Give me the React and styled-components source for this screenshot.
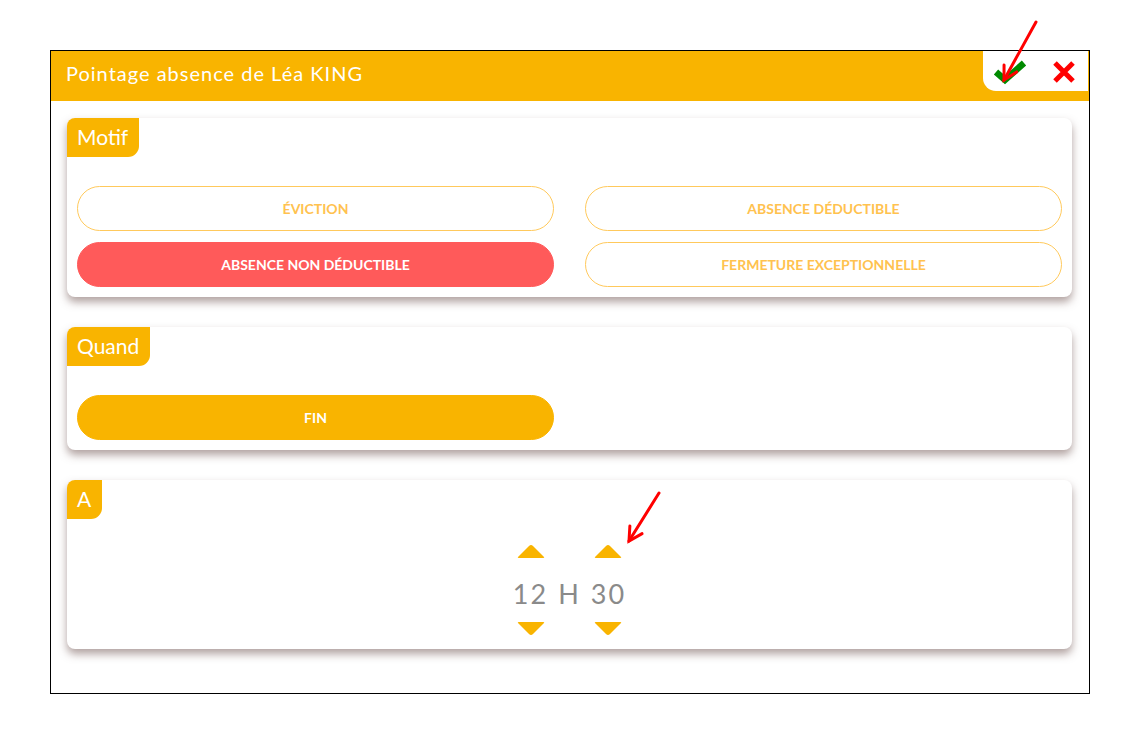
import styled, { createGlobalStyle } from "styled-components";

const GlobalStyle = createGlobalStyle`
  html, body {
    margin: 0;
    padding: 0;
    background: #ffffff;
    font-family: "Lato", "Noto Sans", sans-serif;
  }
`;

const YELLOW = "#f9b400";

const motifs = [
  { label: "Éviction", active: false },
  { label: "Absence déductible", active: false },
  { label: "Absence non déductible", active: true },
  { label: "Fermeture exceptionnelle", active: false },
];

const CheckIcon = () => (
  <svg width="34" height="26" viewBox="0 0 34 26">
    <path d="M3 13 L12 21 L31 4" fill="none" stroke="#008a00" strokeWidth="6.5" strokeLinejoin="miter" />
  </svg>
);

const CloseIcon = () => (
  <svg width="24" height="24" viewBox="0 0 24 24">
    <path d="M3 3 L21 21 M21 3 L3 21" stroke="#ff0000" strokeWidth="5" />
  </svg>
);

const Arrow = ({ x1, y1, x2, y2 }) => {
  const ang = Math.atan2(y2 - y1, x2 - x1);
  const len = 15;
  const spread = 0.5;
  const p1 = [x2 - len * Math.cos(ang - spread), y2 - len * Math.sin(ang - spread)];
  const p2 = [x2 - len * Math.cos(ang + spread), y2 - len * Math.sin(ang + spread)];
  return (
    <g stroke="#ff0000" strokeWidth="3" fill="none" strokeLinecap="round">
      <line x1={x1} y1={y1} x2={x2} y2={y2} />
      <polyline points={`${p1[0]},${p1[1]} ${x2},${y2} ${p2[0]},${p2[1]}`} />
    </g>
  );
};

const Caret = ({ up, col }) => (
  <CaretBox $col={col} $up={up}>
    <svg width="30" height="16" viewBox="0 0 30 16">
      {up ? (
        <path d="M2 14 L13 3 Q15 1 17 3 L28 14 Q29 15 27 15 L3 15 Q1 15 2 14 Z" fill={YELLOW} />
      ) : (
        <path d="M2 2 L13 13 Q15 15 17 13 L28 2 Q29 1 27 1 L3 1 Q1 1 2 2 Z" fill={YELLOW} />
      )}
    </svg>
  </CaretBox>
);

export default function App() {
  return (
    <Page>
      <GlobalStyle />
      <Dialog>
        <Header>
          <Title>Pointage absence de Léa KING</Title>
          <Actions>
            <IconButton>
              <CheckIcon />
            </IconButton>
            <IconButton>
              <CloseIcon />
            </IconButton>
          </Actions>
        </Header>
        <Body>
          <Card>
            <Tab>Motif</Tab>
            <ButtonGrid>
              {motifs.map((m) => (
                <Choice key={m.label} $active={m.active}>
                  {m.label}
                </Choice>
              ))}
            </ButtonGrid>
          </Card>
          <Card>
            <Tab>Quand</Tab>
            <ButtonGrid>
              <Choice $filled>Fin</Choice>
            </ButtonGrid>
          </Card>
          <Card>
            <Tab>A</Tab>
            <TimePicker>
              <Caret up col={1} />
              <Caret up col={3} />
              <Digits $col={1}>12</Digits>
              <Digits $col={2}>H</Digits>
              <Digits $col={3}>30</Digits>
              <Caret col={1} />
              <Caret col={3} />
            </TimePicker>
          </Card>
        </Body>
      </Dialog>
      <Annotations width="1140" height="744">
        <Arrow x1={1036} y1={22} x2={1004} y2={80} />
        <Arrow x1={659} y1={493} x2={629} y2={541} />
      </Annotations>
    </Page>
  );
}

const Page = styled.div`
  position: relative;
  width: 1140px;
  height: 744px;
  padding: 50px 0 0 50px;
  box-sizing: border-box;
`;

const Dialog = styled.div`
  width: 1040px;
  height: 644px;
  box-sizing: border-box;
  border: 1px solid #000;
  background: #fff;
  display: flex;
  flex-direction: column;
`;

const Header = styled.div`
  height: 50px;
  background: ${YELLOW};
  display: flex;
  align-items: flex-start;
  justify-content: space-between;
  padding-left: 15px;
  padding-right: 1px;
`;

const Title = styled.h1`
  margin: 0;
  line-height: 44px;
  font-size: 20px;
  letter-spacing: 1px;
  font-weight: 400;
  color: #fff;
`;

const Actions = styled.div`
  width: 105px;
  height: 40px;
  background: #fff;
  border-bottom-left-radius: 13px;
  display: flex;
  align-items: center;
  justify-content: space-between;
  padding: 0 12px 0 10px;
  box-sizing: border-box;
`;

const IconButton = styled.span`
  display: flex;
  align-items: center;
  padding-top: 2px;
`;

const Body = styled.div`
  padding: 17px 17px 0 16px;
  display: flex;
  flex-direction: column;
  gap: 30px;
`;

const Card = styled.section`
  background: #fff;
  border-radius: 8px;
  box-shadow: 0 5px 9px rgba(100, 70, 65, 0.5);
  padding-bottom: 10px;
  overflow: hidden;
`;

const Tab = styled.div`
  display: inline-block;
  height: 39px;
  line-height: 38px;
  padding: 0 11px 0 10px;
  background: ${YELLOW};
  color: #fff;
  font-size: 21px;
  border-bottom-right-radius: 11px;
`;

const ButtonGrid = styled.div`
  display: grid;
  grid-template-columns: 1fr 1fr;
  column-gap: 31px;
  row-gap: 11px;
  padding: 29px 10px 0 10px;
`;

const Choice = styled.div`
  height: 45px;
  box-sizing: border-box;
  border-radius: 23px;
  display: flex;
  align-items: center;
  justify-content: center;
  text-transform: uppercase;
  font-size: 14px;
  font-weight: 700;
  border: 1px solid ${(p) => (p.$active ? "#ff5a5a" : p.$filled ? YELLOW : "#ffc95c")};
  background: ${(p) => (p.$active ? "#ff5a5a" : p.$filled ? YELLOW : "#fff")};
  color: ${(p) => (p.$active || p.$filled ? "#fff" : "#ffc24f")};
`;

const TimePicker = styled.div`
  display: grid;
  grid-template-columns: repeat(3, auto);
  justify-content: center;
  justify-items: center;
  column-gap: 10px;
  padding-top: 24px;
  padding-bottom: 2px;
`;

const CaretBox = styled.div`
  grid-column: ${(p) => p.$col};
  grid-row: ${(p) => (p.$up ? 1 : 3)};
  display: flex;
  margin: ${(p) => (p.$up ? "0 0 19px" : "11px 0 0")};
`;

const Digits = styled.div`
  grid-column: ${(p) => p.$col};
  grid-row: 2;
  font-size: 27px;
  color: #8a8a8a;
  letter-spacing: 2px;
  line-height: 32px;
`;

const Annotations = styled.svg`
  position: absolute;
  left: 0;
  top: 0;
  pointer-events: none;
`;
